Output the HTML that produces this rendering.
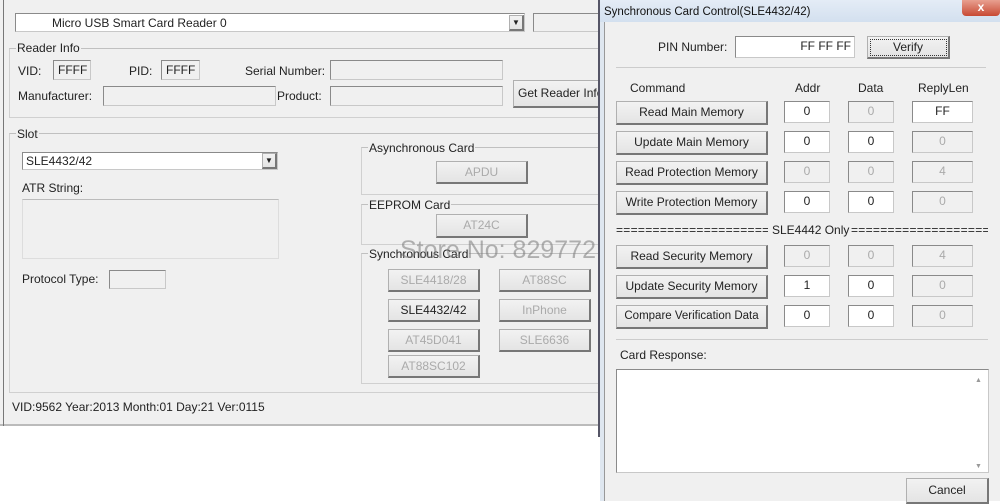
<!DOCTYPE html>
<html><head><meta charset="utf-8"><style>
*{box-sizing:border-box;margin:0;padding:0}
body{width:1000px;height:501px;overflow:hidden;background:#fff;font:12px "Liberation Sans",sans-serif;color:#222;position:relative}
div,span{position:absolute}
.t{white-space:nowrap;line-height:14px}
.sk{background:#f0f0f0;border:1px solid #c8c8c8;border-top-color:#8a8a8a;border-left-color:#8a8a8a}
.wh{background:#fff}
.btn{background:linear-gradient(#f2f2f2,#e4e4e4);border:1px solid #b0b0b0;border-right:2px solid #777;border-bottom:2px solid #777;text-align:center;line-height:21px;white-space:nowrap;color:#222}
.dis{color:#aaa}
.g{border:1px solid #d0d0d0;border-top-color:#c0c0c0}
.gt{background:#f0f0f0;padding:0 1px}
.in{text-align:center;line-height:18px}
.eq{overflow:hidden;white-space:nowrap;line-height:14px;letter-spacing:0.3px}
</style></head><body>
<!-- left window -->
<div style="left:0;top:0;width:600px;height:426px;background:#f0f0f0;border-bottom:2px solid #bbb"></div>
<div style="left:3px;top:0;width:1px;height:426px;background:#777"></div>
<div class="sk wh" style="left:15px;top:13px;width:510px;height:19px"></div>
<div class="t" style="left:52px;top:16px">Micro USB Smart Card Reader 0</div>
<div class="btn" style="left:509px;top:15px;width:15px;height:16px;font-size:8px;line-height:13px">▼</div>
<div class="sk" style="left:533px;top:13px;width:70px;height:19px"></div>

<div class="g" style="left:9px;top:48px;width:600px;height:70px"></div>
<div class="t gt" style="left:16px;top:41px">Reader Info</div>
<div class="t" style="left:18px;top:64px">VID:</div>
<div class="sk t" style="left:53px;top:60px;width:38px;height:20px;padding:2px 4px">FFFF</div>
<div class="t" style="left:129px;top:64px">PID:</div>
<div class="sk t" style="left:161px;top:60px;width:39px;height:20px;padding:2px 4px">FFFF</div>
<div class="t" style="left:245px;top:64px">Serial Number:</div>
<div class="sk" style="left:330px;top:60px;width:173px;height:20px"></div>
<div class="t" style="left:18px;top:89px">Manufacturer:</div>
<div class="sk" style="left:103px;top:86px;width:173px;height:20px"></div>
<div class="t" style="left:277px;top:89px">Product:</div>
<div class="sk" style="left:330px;top:86px;width:173px;height:20px"></div>
<div class="btn" style="left:513px;top:80px;width:100px;height:28px;line-height:25px;text-align:left;padding-left:4px">Get Reader Info</div>

<div class="g" style="left:9px;top:133px;width:600px;height:260px"></div>
<div class="t gt" style="left:16px;top:127px">Slot</div>
<div class="sk wh t" style="left:22px;top:152px;width:256px;height:18px;padding:1px 3px">SLE4432/42</div>
<div class="btn" style="left:262px;top:153px;width:15px;height:16px;font-size:8px;line-height:13px">▼</div>
<div class="t" style="left:22px;top:181px">ATR String:</div>
<div class="sk" style="left:22px;top:199px;width:257px;height:60px;border-color:#ddd;border-top-color:#bbb"></div>
<div class="t" style="left:22px;top:272px">Protocol Type:</div>
<div class="sk" style="left:109px;top:270px;width:57px;height:19px"></div>

<div class="g" style="left:361px;top:147px;width:245px;height:48px"></div>
<div class="t gt" style="left:368px;top:141px">Asynchronous Card</div>
<div class="btn dis" style="left:436px;top:161px;width:92px;height:23px">APDU</div>
<div class="g" style="left:361px;top:204px;width:245px;height:41px"></div>
<div class="t gt" style="left:368px;top:198px">EEPROM Card</div>
<div class="btn dis" style="left:436px;top:214px;width:92px;height:24px">AT24C</div>
<div class="g" style="left:361px;top:253px;width:245px;height:131px"></div>
<div class="t gt" style="left:368px;top:247px">Synchronous Card</div>
<div class="btn dis" style="left:388px;top:269px;width:92px;height:23px">SLE4418/28</div>
<div class="btn dis" style="left:499px;top:269px;width:92px;height:23px">AT88SC</div>
<div class="btn" style="left:388px;top:299px;width:92px;height:23px">SLE4432/42</div>
<div class="btn dis" style="left:499px;top:299px;width:92px;height:23px">InPhone</div>
<div class="btn dis" style="left:388px;top:329px;width:92px;height:23px">AT45D041</div>
<div class="btn dis" style="left:499px;top:329px;width:92px;height:23px">SLE6636</div>
<div class="btn dis" style="left:388px;top:355px;width:92px;height:23px">AT88SC102</div>
<div class="t" style="left:400px;top:236px;font-size:25px;line-height:28px;color:rgba(120,120,120,.55)">Store No: 829772</div>
<div class="t" style="left:12px;top:400px">VID:9562 Year:2013 Month:01 Day:21 Ver:0115</div>
<div style="left:598px;top:0;width:2px;height:437px;background:#556"></div>

<!-- dialog -->
<div style="left:600px;top:0;width:400px;height:501px;background:#f0f0f0"></div>
<div style="left:600px;top:0;width:400px;height:22px;background:linear-gradient(#e4ecf6,#d3e0ef)"></div>
<div class="t" style="left:604px;top:5px;font-size:11.5px;color:#111">Synchronous Card Control(SLE4432/42)</div>
<div style="left:962px;top:0;width:38px;height:16px;background:linear-gradient(#e8a090,#c84a34);border-radius:0 0 4px 4px;color:#fff;font-weight:bold;text-align:center;line-height:14px;font-size:12px">x</div>
<div style="left:600px;top:22px;width:5px;height:479px;background:#dfe7f0"></div>
<div style="left:604px;top:22px;width:1px;height:479px;background:#999"></div>
<div class="t" style="left:658px;top:40px">PIN Number:</div>
<div class="sk wh t" style="left:735px;top:36px;width:120px;height:22px;text-align:right;padding:2px 3px">FF FF FF</div>
<div class="btn" style="left:867px;top:36px;width:83px;height:23px;outline:1px dotted #333;outline-offset:-4px">Verify</div>
<div style="left:616px;top:67px;width:370px;height:1px;background:#ccc"></div>
<div class="t" style="left:630px;top:81px">Command</div>
<div class="t" style="left:795px;top:81px">Addr</div>
<div class="t" style="left:858px;top:81px">Data</div>
<div class="t" style="left:918px;top:81px">ReplyLen</div>

<div class="btn" style="left:616px;top:101px;width:152px;height:24px">Read Main Memory</div>
<div class="sk wh in" style="left:784px;top:101px;width:46px;height:22px">0</div>
<div class="sk in dis" style="left:848px;top:101px;width:46px;height:22px">0</div>
<div class="sk wh in" style="left:912px;top:101px;width:61px;height:22px">FF</div>
<div class="btn" style="left:616px;top:131px;width:152px;height:24px">Update Main Memory</div>
<div class="sk wh in" style="left:784px;top:131px;width:46px;height:22px">0</div>
<div class="sk wh in" style="left:848px;top:131px;width:46px;height:22px">0</div>
<div class="sk in dis" style="left:912px;top:131px;width:61px;height:22px">0</div>
<div class="btn" style="left:616px;top:161px;width:152px;height:24px">Read Protection Memory</div>
<div class="sk in dis" style="left:784px;top:161px;width:46px;height:22px">0</div>
<div class="sk in dis" style="left:848px;top:161px;width:46px;height:22px">0</div>
<div class="sk in dis" style="left:912px;top:161px;width:61px;height:22px">4</div>
<div class="btn" style="left:616px;top:191px;width:152px;height:24px">Write Protection Memory</div>
<div class="sk wh in" style="left:784px;top:191px;width:46px;height:22px">0</div>
<div class="sk wh in" style="left:848px;top:191px;width:46px;height:22px">0</div>
<div class="sk in dis" style="left:912px;top:191px;width:61px;height:22px">0</div>
<div class="eq" style="left:616px;top:223px;width:152px">========================================</div>
<div class="t" style="left:772px;top:223px">SLE4442 Only</div>
<div class="eq" style="left:851px;top:223px;width:137px">========================================</div>
<div class="btn" style="left:616px;top:245px;width:152px;height:24px">Read Security Memory</div>
<div class="sk in dis" style="left:784px;top:245px;width:46px;height:22px">0</div>
<div class="sk in dis" style="left:848px;top:245px;width:46px;height:22px">0</div>
<div class="sk in dis" style="left:912px;top:245px;width:61px;height:22px">4</div>
<div class="btn" style="left:616px;top:275px;width:152px;height:24px">Update Security Memory</div>
<div class="sk wh in" style="left:784px;top:275px;width:46px;height:22px">1</div>
<div class="sk wh in" style="left:848px;top:275px;width:46px;height:22px">0</div>
<div class="sk in dis" style="left:912px;top:275px;width:61px;height:22px">0</div>
<div class="btn" style="left:616px;top:305px;width:152px;height:24px;font-size:11.5px">Compare Verification Data</div>
<div class="sk wh in" style="left:784px;top:305px;width:46px;height:22px">0</div>
<div class="sk wh in" style="left:848px;top:305px;width:46px;height:22px">0</div>
<div class="sk in dis" style="left:912px;top:305px;width:61px;height:22px">0</div>
<div style="left:616px;top:339px;width:372px;height:1px;background:#ccc"></div>
<div class="t" style="left:620px;top:348px">Card Response:</div>
<div class="sk wh" style="left:616px;top:369px;width:373px;height:104px"></div>
<div class="t" style="left:975px;top:374px;font-size:7px;color:#999">▲</div>
<div class="t" style="left:975px;top:460px;font-size:7px;color:#999">▼</div>
<div class="btn" style="left:906px;top:478px;width:83px;height:26px;line-height:23px">Cancel</div>
</body></html>
